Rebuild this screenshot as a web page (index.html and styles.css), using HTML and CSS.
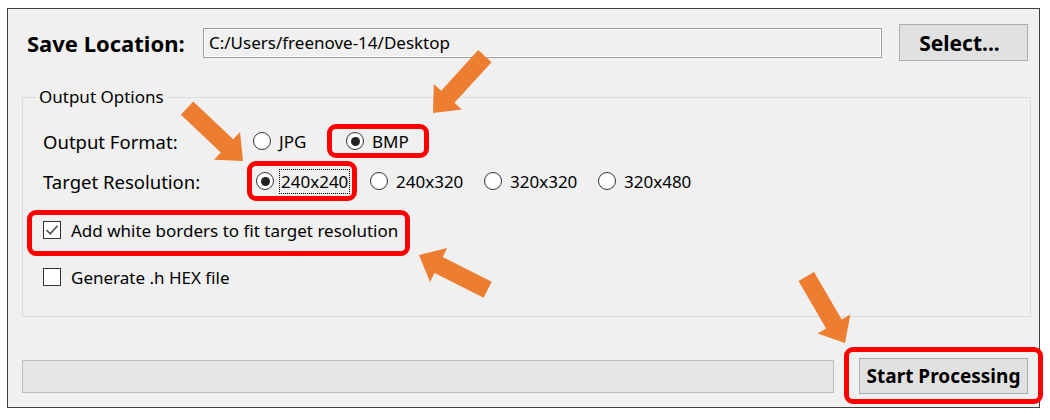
FILE: index.html
```html
<!DOCTYPE html>
<html>
<head>
<meta charset="utf-8">
<link rel="stylesheet" href="styles.css">
</head>
<body>
<div class="window">
  <div class="top-row">
    <span class="save-label">Save Location:</span>
    <div class="path-input">C:/Users/freenove-14/Desktop</div>
    <button class="btn select-btn">Select...</button>
  </div>

  <fieldset class="group">
    <legend class="group-title">Output Options</legend>
    <div class="opt-row">
      <span class="row-label">Output Format:</span>
      <div class="options fmt">
        <label class="radio"><span class="circle"></span><span class="rtext">JPG</span></label>
        <label class="radio"><span class="circle on"></span><span class="rtext">BMP</span></label>
      </div>
    </div>
    <div class="opt-row">
      <span class="row-label">Target Resolution:</span>
      <div class="options res">
        <label class="radio"><span class="circle on"></span><span class="rtext focus">240x240</span></label>
        <label class="radio"><span class="circle"></span><span class="rtext">240x320</span></label>
        <label class="radio"><span class="circle"></span><span class="rtext">320x320</span></label>
        <label class="radio"><span class="circle"></span><span class="rtext">320x480</span></label>
      </div>
    </div>
    <label class="check-row first">
      <span class="box"><svg width="16" height="16" viewBox="0 0 16 16"><path d="M2.5 8 L6.3 11.8 L13.5 3.8" fill="none" stroke="#4a4a4a" stroke-width="1.5"/></svg></span>
      <span class="ctext">Add white borders to fit target resolution</span>
    </label>
    <label class="check-row second">
      <span class="box"></span>
      <span class="ctext">Generate .h HEX file</span>
    </label>
  </fieldset>

  <div class="bottom-row">
    <div class="progress"></div>
    <button class="btn start-btn">Start Processing</button>
  </div>
</div>

<div class="annot">
  <div class="hl hl-bmp"></div>
  <div class="hl hl-res"></div>
  <div class="hl hl-check"></div>
  <div class="hl hl-start"></div>
  <svg class="arrows" width="1050" height="420" viewBox="0 0 1050 420">
    <g fill="#ed7d31">
      <polygon transform="translate(243 161) rotate(43.4)" points="0,0 -22,-19 -22,-9 -77,-9 -77,9 -22,9 -22,19"/>
      <polygon transform="translate(433 113) rotate(132.4)" points="0,0 -22,-19 -22,-9 -77,-9 -77,9 -22,9 -22,19"/>
      <polygon transform="translate(419 255) rotate(-153.1)" points="0,0 -22,-19 -22,-9 -77,-9 -77,9 -22,9 -22,19"/>
      <polygon transform="translate(845 343) rotate(59.8)" points="0,0 -22,-19 -22,-9 -77,-9 -77,9 -22,9 -22,19"/>
    </g>
  </svg>
</div>
</body>
</html>
```

FILE: styles.css
```css
html, body {
  margin: 0;
  padding: 0;
  background: #ffffff;
}

body {
  width: 1050px;
  height: 420px;
  position: relative;
  font-family: "Noto Sans", "Open Sans", sans-serif;
  color: #000;
  overflow: hidden;
}

.window {
  margin: 8px 0 0 7px;
  width: 1031px;
  height: 398px;
  border: 1px solid #3f3f3f;
  background: #f0f0f0;
  display: flex;
  flex-direction: column;
}

/* top row */
.top-row {
  display: flex;
  align-items: center;
  margin: 15px 10px 0 19px;
  height: 37px;
}

.save-label {
  font-weight: bold;
  font-size: 22px;
  width: 176px;
  flex: none;
  white-space: nowrap;
}

.path-input {
  width: 679px;
  height: 30px;
  border: 1px solid #9c9c9c;
  box-shadow: inset 0 0 0 1px #ffffff;
  background: #f0f0f0;
  font-size: 17px;
  line-height: 28px;
  padding-left: 5px;
  box-sizing: border-box;
  flex: none;
}

.btn {
  font-family: "Noto Sans", "Open Sans", sans-serif;
  font-weight: bold;
  color: #000;
  background: #e1e1e1;
  border: 1px solid #adadad;
  padding: 0;
  box-sizing: border-box;
}

.select-btn {
  margin-left: 17px;
  width: 129px;
  height: 37px;
  font-size: 21px;
  padding-right: 8px;
}

/* group box */
.group {
  margin: 24px 8px 0 14px;
  border: 1px solid #dcdcdc;
  padding: 0 0 19px 20px;
  min-width: 0;
}

.group-title {
  font-size: 17px;
  padding: 0 3px;
  margin-left: -7px;
  line-height: 24px;
}

.opt-row {
  display: flex;
  align-items: center;
  height: 40px;
}

.opt-row:first-of-type {
  margin-top: 12px;
}

.row-label {
  width: 210px;
  flex: none;
  font-size: 18.5px;
  white-space: nowrap;
}

.options {
  display: flex;
  align-items: center;
  font-size: 17px;
}

.options.res {
  margin-left: 3px;
}

.radio {
  display: flex;
  align-items: center;
}

.fmt .radio {
  width: 93px;
}

.res .radio {
  width: 114px;
}

.circle {
  width: 18px;
  height: 18px;
  box-sizing: border-box;
  border: 1.5px solid #333333;
  border-radius: 50%;
  background: #ffffff;
  flex: none;
  display: flex;
  align-items: center;
  justify-content: center;
}

.circle.on::after {
  content: "";
  width: 9px;
  height: 9px;
  border-radius: 50%;
  background: #222222;
}

.rtext {
  margin-left: 8px;
  line-height: 23px;
}

.rtext.focus {
  outline: 1px dotted #000;
  outline-offset: 0;
  padding: 0 1px;
  margin-left: 6px;
}

/* checkboxes */
.check-row {
  display: flex;
  align-items: center;
  height: 40px;
  font-size: 17px;
}

.check-row.first {
  margin-top: 9px;
}

.check-row.second {
  margin-top: 7px;
}

.box {
  width: 18px;
  height: 18px;
  box-sizing: border-box;
  border: 1px solid #333333;
  background: #ffffff;
  flex: none;
  display: flex;
  align-items: center;
  justify-content: center;
}

.ctext {
  margin-left: 10px;
}

/* bottom row */
.bottom-row {
  display: flex;
  align-items: center;
  margin: 41px 10px 0 14px;
  height: 36px;
}

.progress {
  width: 812px;
  height: 33px;
  box-sizing: border-box;
  border: 1px solid #bcbcbc;
  background: #e6e6e6;
  flex: none;
}

.start-btn {
  margin-left: 25px;
  width: 169px;
  height: 36px;
  font-size: 19px;
}

/* annotations */
.annot {
  position: absolute;
  left: 0;
  top: 0;
  width: 1050px;
  height: 420px;
  pointer-events: none;
}

.arrows {
  position: absolute;
  left: 0;
  top: 0;
}

.hl {
  position: absolute;
  box-sizing: border-box;
  border: 5px solid #ff0000;
  border-radius: 9px;
}

.hl-bmp { left: 327px; top: 124px; width: 102px; height: 34px; }
.hl-res { left: 247px; top: 161px; width: 110px; height: 40px; }
.hl-check { left: 27px; top: 210px; width: 383px; height: 46px; }
.hl-start { left: 844px; top: 347px; width: 199px; height: 57px; }
```
